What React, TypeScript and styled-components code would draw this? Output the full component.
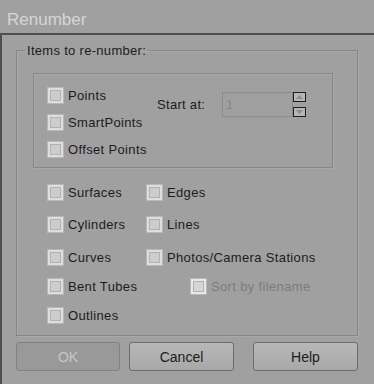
import React from "react";
import styled, { createGlobalStyle } from "styled-components";

const Global = createGlobalStyle`
  html, body { margin: 0; padding: 0; background: #a0a0a0; }
  * { box-sizing: border-box; }
`;

const Window = styled.div`
  width: 374px;
  height: 384px;
  background: #a0a0a0;
  display: flex;
  flex-direction: column;
  font-family: "Liberation Sans", Arial, sans-serif;
  overflow: hidden;
`;

const TitleBar = styled.div`
  height: 33px;
  padding: 6px 0 0 7px;
  display: flex;
  align-items: center;
  font-size: 17px;
  color: #d6d6d6;
`;

const Body = styled.div`
  flex: 1;
  border-top: 2px solid #4e4e4e;
  border-left: 2px solid #4e4e4e;
  padding: 0 16px 0 14px;
  display: flex;
  flex-direction: column;
`;

const Group = styled.fieldset`
  margin: 8px 0 0 0;
  padding: 0 0 12px 0;
  min-inline-size: 0;
  border: 1px solid #878787;
  box-shadow: inset 1px 1px 0 #a9a9a9, 1px 1px 0 #a9a9a9;
  display: flex;
  flex-direction: column;
`;

const Legend = styled.legend`
  margin-left: 8px;
  padding: 0 2px;
  font-size: 13px;
  line-height: 15px;
  letter-spacing: 0.3px;
  color: #1c1c1c;
`;

const InnerBox = styled.div`
  margin: 15px 24px 0 16px;
  height: 95px;
  border: 1px solid #878787;
  box-shadow: inset 1px 1px 0 #a9a9a9, 1px 1px 0 #a9a9a9;
  padding: 14px 0 0 14px;
  display: flex;
`;

const CheckColumn = styled.div`
  width: 109px;
  display: flex;
  flex-direction: column;
  gap: 12px;
`;

const Check = styled.label<{ $disabled?: boolean }>`
  display: flex;
  align-items: center;
  gap: 5px;
  height: 15px;
  font-size: 13px;
  letter-spacing: 0.35px;
  color: ${(p) => (p.$disabled ? "#7c7c7c" : "#1c1c1c")};
  white-space: nowrap;
`;

const Box = styled.span<{ $disabled?: boolean }>`
  width: 15px;
  height: 15px;
  flex: none;
  border: 2px solid ${(p) => (p.$disabled ? "#e8e8e8" : "#dedede")};
  background: ${(p) => (p.$disabled ? "#d6d6d6" : "#cdcdcd")};
  box-shadow: inset 0 0 0 1px #b2b2b2, 0 0 0 1px #b8b8b8;
`;

const StartRow = styled.div`
  margin-top: 4px;
  height: 25px;
  display: flex;
  align-items: center;
`;

const StartLabel = styled.span`
  width: 65px;
  font-size: 13px;
  letter-spacing: 0.3px;
  color: #1c1c1c;
`;

const NumberField = styled.div`
  width: 71px;
  height: 25px;
  border: 1px solid #8a8a8a;
  padding-left: 3px;
  display: flex;
  align-items: center;
  font-size: 13px;
  color: #868686;
`;

const Spinner = styled.div`
  display: flex;
  flex-direction: column;
  gap: 5px;
  align-self: stretch;
`;

const SpinButton = styled.div`
  width: 13px;
  height: 10px;
  border: 1px solid #1e1e1e;
  background: #b6b6b6;
  display: flex;
  align-items: center;
  justify-content: center;
`;

const Grid = styled.div`
  margin: 17px 0 0 31px;
  display: grid;
  grid-template-columns: 99px auto;
  grid-template-rows: 32px 33px 29px 29px 15px;
  align-items: start;
`;

const Cell = styled.div<{ $indent?: number }>`
  margin-left: ${(p) => p.$indent ?? 0}px;
`;

const ButtonRow = styled.div`
  margin-top: 6px;
  display: flex;
`;

const Button = styled.div<{ $disabled?: boolean; $gap?: number; $w: number }>`
  width: ${(p) => p.$w}px;
  height: 29px;
  margin-left: ${(p) => p.$gap ?? 0}px;
  border: 1px solid ${(p) => (p.$disabled ? "#808080" : "#6c6c6c")};
  border-radius: 3px;
  background: ${(p) =>
    p.$disabled ? "#999999" : "linear-gradient(#b8b8b8, #a8a8a8)"};
  display: flex;
  align-items: center;
  justify-content: center;
  font-size: 14px;
  color: ${(p) => (p.$disabled ? "#c6c6c6" : "#1c1c1c")};
`;

const Tri = ({ up }: { up?: boolean }) => (
  <svg width="7" height="4" viewBox="0 0 7 4">
    <polygon points={up ? "0,4 7,4 3.5,0" : "0,0 7,0 3.5,4"} fill="#8c8c8c" />
  </svg>
);

const CB = ({ label, disabled }: { label: string; disabled?: boolean }) => (
  <Check $disabled={disabled}>
    <Box $disabled={disabled} />
    {label}
  </Check>
);

export default function App() {
  return (
    <>
      <Global />
      <Window>
        <TitleBar>Renumber</TitleBar>
        <Body>
          <Group>
            <Legend>Items to re-number:</Legend>
            <InnerBox>
              <CheckColumn>
                <CB label="Points" />
                <CB label="SmartPoints" />
                <CB label="Offset Points" />
              </CheckColumn>
              <StartRow>
                <StartLabel>Start at:</StartLabel>
                <NumberField>1</NumberField>
                <Spinner>
                  <SpinButton>
                    <Tri up />
                  </SpinButton>
                  <SpinButton>
                    <Tri />
                  </SpinButton>
                </Spinner>
              </StartRow>
            </InnerBox>
            <Grid>
              <Cell><CB label="Surfaces" /></Cell>
              <Cell><CB label="Edges" /></Cell>
              <Cell><CB label="Cylinders" /></Cell>
              <Cell><CB label="Lines" /></Cell>
              <Cell><CB label="Curves" /></Cell>
              <Cell><CB label="Photos/Camera Stations" /></Cell>
              <Cell><CB label="Bent Tubes" /></Cell>
              <Cell $indent={44}><CB label="Sort by filename" disabled /></Cell>
              <Cell><CB label="Outlines" /></Cell>
            </Grid>
          </Group>
          <ButtonRow>
            <Button $w={104} $disabled>OK</Button>
            <Button $w={105} $gap={9}>Cancel</Button>
            <Button $w={105} $gap={19}>Help</Button>
          </ButtonRow>
        </Body>
      </Window>
    </>
  );
}
